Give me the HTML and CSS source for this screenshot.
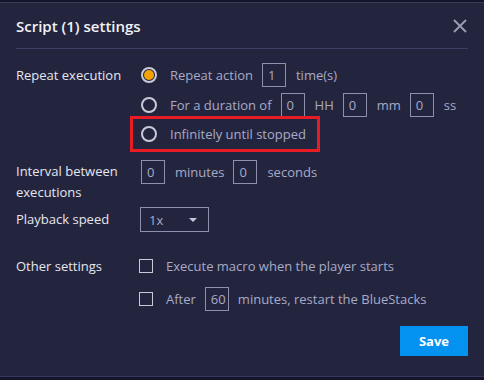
FILE: index.html
```html
<!DOCTYPE html>
<html>
<head>
<meta charset="utf-8">
<link rel="stylesheet" href="styles.css">
</head>
<body>
<div class="dialog">
  <div class="head">
    <h1 class="title">Script (1) settings</h1>
    <span class="close"><svg width="14" height="14" viewBox="0 0 14 14"><path d="M1 1L13 13M13 1L1 13" stroke="#9c9eb4" stroke-width="1.8" fill="none"/></svg></span>
  </div>
  <div class="divider"></div>

  <div class="section repeat">
    <div class="label">Repeat execution</div>
    <div class="opts">
      <div class="opt">
        <span class="radio on"></span><span class="txt">Repeat action</span><span class="box">1</span><span class="txt">time(s)</span>
      </div>
      <div class="opt">
        <span class="radio"></span><span class="txt">For a duration of</span><span class="box">0</span><span class="txt">HH</span><span class="box">0</span><span class="txt">mm</span><span class="box">0</span><span class="txt">ss</span>
      </div>
      <div class="opt marked">
        <span class="radio"></span><span class="txt">Infinitely until stopped</span>
      </div>
    </div>
  </div>

  <div class="section interval">
    <div class="label two">Interval between<br>executions</div>
    <div class="inline">
      <span class="box">0</span><span class="txt">minutes</span><span class="box">0</span><span class="txt">seconds</span>
    </div>
  </div>

  <div class="section speed">
    <div class="label">Playback speed</div>
    <div class="inline">
      <span class="select"><span class="sel-val">1x</span><span class="caret"></span></span>
    </div>
  </div>

  <div class="section other">
    <div class="label">Other settings</div>
    <div class="opts">
      <div class="chk-row"><span class="check"></span><span class="txt">Execute macro when the player starts</span></div>
      <div class="chk-row"><span class="check"></span><span class="txt">After</span><span class="box">60</span><span class="txt">minutes, restart the BlueStacks</span></div>
    </div>
  </div>

  <div class="foot"><span class="save">Save</span></div>
</div>
</body>
</html>
```

FILE: styles.css
```css
html, body {
  margin: 0;
  padding: 0;
  background: #14152a;
}
body {
  font-family: "Open Sans", "Noto Sans", sans-serif;
  font-size: 13px;
  color: #e4e4ec;
}
.dialog {
  margin-top: 2px;
  border-top: 1px solid #383a5a;
  border-bottom: 1px solid #34365a;
  background: #23253f;
  height: 375px;
  box-sizing: border-box;
}
.head {
  height: 45px;
  padding: 0 17px 0 16px;
  display: flex;
  align-items: center;
  justify-content: space-between;
}
.title {
  margin: 0;
  font-size: 15px;
  font-weight: 600;
  color: #f2f2f6;
}
.close {
  display: flex;
  width: 14px;
  height: 14px;
}
.divider {
  height: 1px;
  background: #3d4062;
  margin: 0 16px;
}
.section {
  display: grid;
  grid-template-columns: 124px 1fr;
  padding: 0 16px;
}
.label {
  line-height: 30px;
  color: #e6e6ee;
}
.repeat { margin-top: 11px; }
.opt {
  height: 30px;
  display: flex;
  align-items: center;
  color: #a8aac6;
}
.opt.marked {
  height: 28px;
  position: relative;
}
.opt.marked::after {
  content: "";
  position: absolute;
  left: -10px;
  top: -4px;
  width: 184px;
  height: 30px;
  border: 3px solid #e81c25;
}
.radio {
  width: 12px;
  height: 12px;
  border: 2px solid #c9cad8;
  border-radius: 50%;
  margin-left: 1px;
  margin-right: 13px;
  flex: none;
  position: relative;
}
.radio.on::after {
  content: "";
  position: absolute;
  left: 1px;
  top: 1px;
  width: 10px;
  height: 10px;
  border-radius: 50%;
  background: #f5a300;
}
.txt {
  color: #a8aac6;
  white-space: nowrap;
}
.box {
  width: 22px;
  height: 22px;
  border: 1px solid #8e90ad;
  box-sizing: content-box;
  color: #a8aac6;
  line-height: 22px;
  text-indent: 5px;
  margin: 0 10px 0 9px;
  flex: none;
}
.interval { margin-top: 12px; }
.label.two {
  line-height: 21px;
  padding-top: 1px;
}
.inline {
  display: flex;
  align-items: flex-start;
  color: #a8aac6;
  line-height: 24px;
}
.interval .box:first-child { margin-left: 1px; }
.speed { margin-top: 4px; }
.speed .label { line-height: 24px; }
.select {
  border: 1px solid #8e90ad;
  display: flex;
  align-items: center;
  justify-content: space-between;
  padding: 0 11px 0 8px;
  box-sizing: border-box;
  width: 69px;
  height: 25px;
  color: #a8aac6;
}
.caret {
  width: 0;
  height: 0;
  border-left: 4px solid transparent;
  border-right: 4px solid transparent;
  border-top: 4px solid #c4c6da;
}
.other { margin-top: 18px; }
.other .label { line-height: 32px; }
.chk-row {
  height: 34px;
  display: flex;
  align-items: center;
}
.chk-row:first-child { height: 32px; }
.check {
  width: 12px;
  height: 12px;
  border: 1px solid #c9cad8;
  margin-left: -1px;
  margin-right: 13px;
  flex: none;
}
.chk-row .box { margin: 0 9px 0 9px; }
.foot {
  display: flex;
  justify-content: flex-end;
  padding: 10px 16px 0;
}
.save {
  width: 68px;
  height: 30px;
  background: #0392ef;
  color: #ffffff;
  font-weight: 700;
  font-size: 13px;
  display: flex;
  align-items: center;
  justify-content: center;
}
```
